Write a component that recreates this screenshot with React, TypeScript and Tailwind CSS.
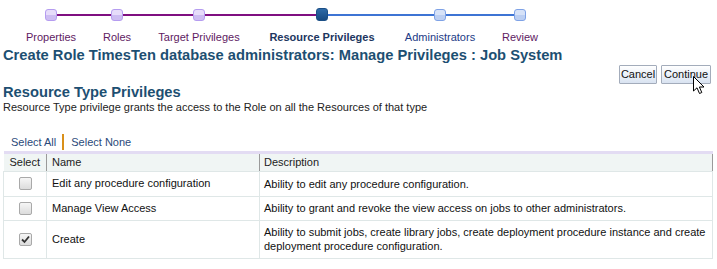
import { useState } from "react";

type Step = { label: string; state: "done" | "current" | "todo"; box: string };

const steps: Step[] = [
  { label: "Properties", state: "done", box: "w-[66px]" },
  { label: "Roles", state: "done", box: "w-[66px]" },
  { label: "Target Privileges", state: "done", box: "w-[98px]" },
  { label: "Resource Privileges", state: "current", box: "w-[148px]" },
  { label: "Administrators", state: "todo", box: "w-[88px]" },
  { label: "Review", state: "todo", box: "w-[72px]" },
];

const rows = [
  {
    name: "Edit any procedure configuration",
    desc: "Ability to edit any procedure configuration.",
    checked: false,
  },
  {
    name: "Manage View Access",
    desc: "Ability to grant and revoke the view access on jobs to other administrators.",
    checked: false,
  },
  {
    name: "Create",
    desc: "Ability to submit jobs, create library jobs, create deployment procedure instance and create deployment procedure configuration.",
    checked: true,
  },
];

function Node({ state }: { state: Step["state"] }) {
  if (state === "current")
    return (
      <div className="w-[12px] h-[13px] rounded-[3px] border border-[#1b4f86] bg-gradient-to-b from-[#2d6aa8] to-[#174a82] shrink-0" />
    );
  if (state === "done")
    return (
      <div className="w-[12px] h-[12px] rounded-[3px] border border-[#b59cf0] bg-[linear-gradient(#e6dcfa_55%,#cdbdf2_55%)] shrink-0" />
    );
  return (
    <div className="w-[12px] h-[12px] rounded-[3px] border border-[#7ea2e6] bg-[linear-gradient(#d6e2f8_55%,#bccff2_55%)] shrink-0" />
  );
}

function Check({ checked }: { checked: boolean }) {
  return (
    <div className="w-[13px] h-[13px] mx-auto rounded-[2px] border border-[#a9a9a9] bg-gradient-to-b from-[#f6f6f6] to-[#dcdcdc] flex items-center justify-center">
      {checked && (
        <svg width="9" height="9" viewBox="0 0 9 9">
          <path d="M1 4.5 L3.5 7 L8 1.5" fill="none" stroke="#333" strokeWidth="1.8" />
        </svg>
      )}
    </div>
  );
}

export default function App() {
  const [list, setList] = useState(rows);

  return (
    <div className="relative w-[717px] h-[269px] bg-white overflow-hidden text-[11px] text-[#222]" style={{ fontFamily: '"Liberation Sans", Arial, sans-serif' }}>
      {/* Train */}
      <div className="flex items-center h-[13px] mt-[8px] pl-[45px]">
        <Node state="done" />
        <div className="w-[54px] h-[2px] bg-[#7f0f80]" />
        <Node state="done" />
        <div className="w-[70px] h-[2px] bg-[#7f0f80]" />
        <Node state="done" />
        <div className="w-[111px] h-[2px] bg-[#7f0f80]" />
        <Node state="current" />
        <div className="w-[106px] h-[2px] bg-[#3d74d4]" />
        <Node state="todo" />
        <div className="w-[68px] h-[2px] bg-[#3d74d4]" />
        <Node state="todo" />
      </div>
      <div className="flex pl-[18px] mt-[10px] h-[13px] leading-[13px]">
        {steps.map((s) => (
          <div
            key={s.label}
            className={
              s.box +
              " text-center whitespace-nowrap " +
              (s.state === "current"
                ? "font-bold text-[#1c3660]"
                : s.state === "todo" && s.label === "Administrators"
                ? "text-[#1c3a86]"
                : "text-[#5e1a62]")
            }
          >
            {s.label}
          </div>
        ))}
      </div>

      <h1 className="mt-[2px] pl-[3px] text-[14.7px] leading-[18px] font-bold text-[#1d4f72] whitespace-nowrap">
        Create Role TimesTen database administrators: Manage Privileges : Job System
      </h1>

      <div className="flex justify-end gap-[4px] pr-[6px] mt-[1px]">
        <button className="h-[19px] w-[38px] px-0 border border-[#a3acbb] rounded-[1px] bg-gradient-to-b from-[#ffffff] to-[#d9e3f1] text-[11px] text-[#111]">
          Cancel
        </button>
        <button className="h-[19px] w-[50px] px-0 border border-[#a3acbb] rounded-[1px] bg-gradient-to-b from-[#ffffff] to-[#d9e3f1] text-[11px] text-[#111]">
          Continue
        </button>
      </div>

      <h2 className="pl-[3px] -mt-[1px] text-[14.7px] leading-[18px] font-bold text-[#1d4f72]">Resource Type Privileges</h2>
      <p className="pl-[3px] leading-[13px] text-[#222]">
        Resource Type privilege grants the access to the Role on all the Resources of that type
      </p>

      <div className="flex items-center pl-[11px] mt-[20px] h-[16px] text-[#2a4a7a]">
        <span className="cursor-pointer" onClick={() => setList(list.map((r) => ({ ...r, checked: true })))}>Select All</span>
        <span className="ml-[6px] mr-[7px] w-[2px] h-[16px] bg-[#d9901a]" />
        <span className="cursor-pointer" onClick={() => setList(list.map((r) => ({ ...r, checked: false })))}>Select None</span>
      </div>

      <table className="ml-[3px] mt-[1px] w-[710px] border-collapse border-t-[3px] border-t-[#e3dcf3]">
        <thead>
          <tr className="bg-[#f0f5f4] h-[18px] text-left font-normal">
            <th className="w-[43px] font-normal text-center border-r border-[#9a9a9a] border-b border-b-[#dfe7e7] px-[4px]">Select</th>
            <th className="w-[213px] font-normal pl-[5px] border-r border-[#9a9a9a] border-b border-b-[#dfe7e7]">Name</th>
            <th className="font-normal pl-[4px] border-r border-[#9a9a9a] border-b border-b-[#dfe7e7]">Description</th>
          </tr>
        </thead>
        <tbody>
          {list.map((r, i) => (
            <tr key={r.name} className={i === 2 ? "h-[38px]" : i === 0 ? "h-[25px]" : "h-[24px]"}>
              <td className="border border-[#dfe7e7]">
                <div onClick={() => setList(list.map((x, j) => (j === i ? { ...x, checked: !x.checked } : x)))}>
                  <Check checked={r.checked} />
                </div>
              </td>
              <td className="border border-[#dfe7e7] pl-[5px] text-[#111]">{r.name}</td>
              <td className="border border-[#dfe7e7] pl-[4px] pr-[4px] leading-[14px] text-[#111]">{r.desc}</td>
            </tr>
          ))}
        </tbody>
      </table>

      {/* mouse pointer over Continue */}
      <svg className="absolute left-[693px] top-[76px]" width="13" height="20" viewBox="0 0 13 20">
        <path d="M0.5 0.5 L0.5 15 L4 11.8 L6.5 17.5 L8.8 16.5 L6.4 11 L11 11 Z" fill="#fff" stroke="#000" strokeWidth="1" strokeLinejoin="round" />
      </svg>
    </div>
  );
}
